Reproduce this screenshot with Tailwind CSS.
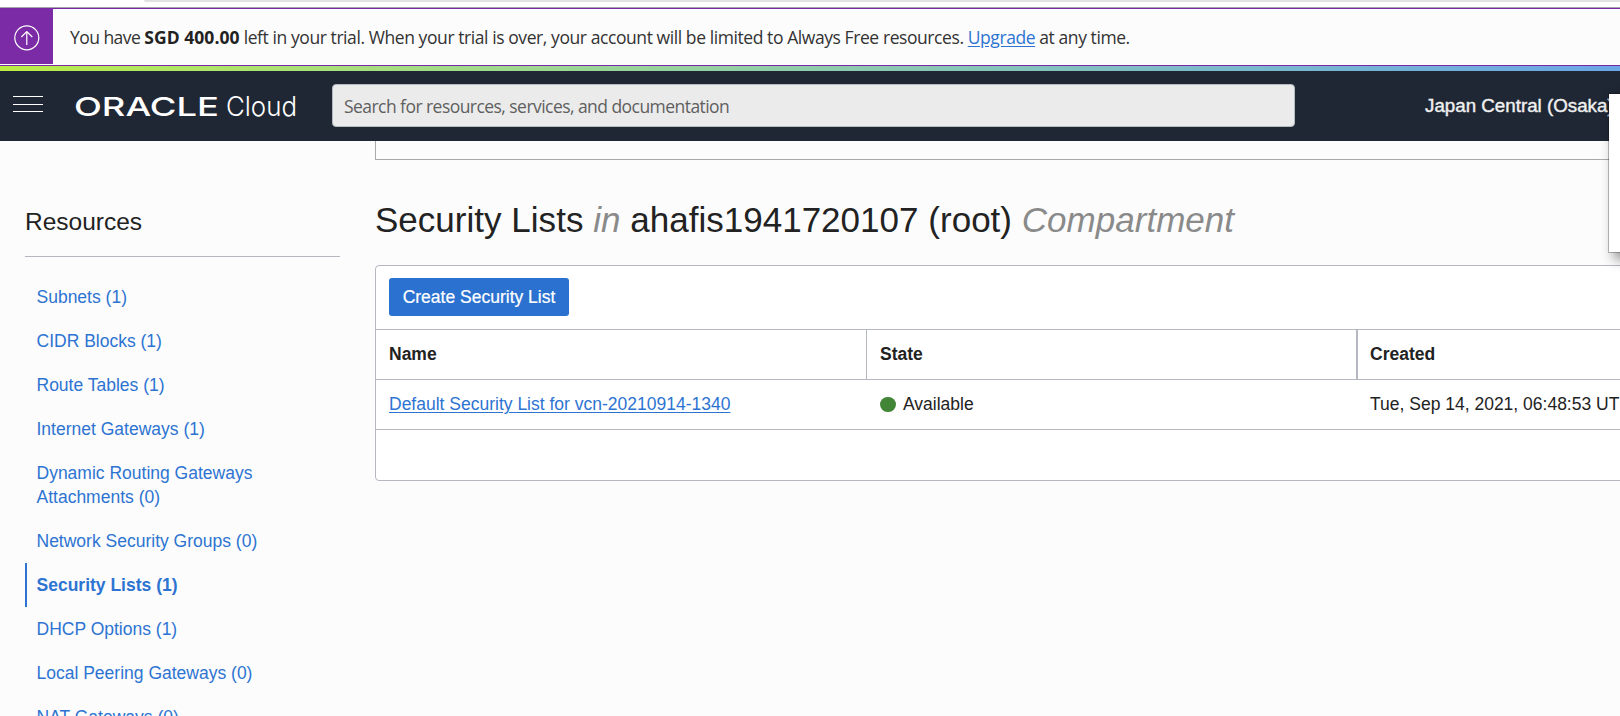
<!DOCTYPE html>
<html lang="en">
<head>
<meta charset="utf-8">
<title>Oracle Cloud - Security Lists</title>
<script src="https://cdn.jsdelivr.net/npm/@tailwindcss/browser@4"></script>
</head>
<body class="relative h-[716px] w-[1620px] overflow-hidden bg-[#fcfcfc] font-['Liberation_Sans',Arial,sans-serif] text-[17.5px] leading-6 text-[#222]">
  <div class="h-[7px] bg-white pl-[144px]"><div class="h-0.5 rounded-bl-full bg-[#e1e1e1]"></div></div>
  <div class="h-px bg-[#a9a3b0]"></div>
  <div class="flex h-[58px] items-start border-y border-[#7a28a3]">
    <div class="flex h-[55px] w-[53px] items-center justify-center bg-[#7b2ba5]">
      <svg class="mt-[3px] h-[26px] w-[26px]" viewBox="0 0 26 26" fill="none" stroke="#fff" stroke-width="1.2"><circle cx="12.800" cy="12.800" r="12"/><path d="M12.800 20V6.500M7.300 12l5.500-5.500 5.500 5.500"/></svg>
    </div>
    <p class="ml-[17px] mt-4 whitespace-nowrap font-['Open_Sans',sans-serif] text-[17.5px] tracking-[-0.42px] text-[#333]"><span class="tracking-[-0.55px]">You have </span><b class="font-bold tracking-[0.05px] text-[#222]">SGD 400.00</b> left in your trial. When your trial is over, your account will be limited to Always Free resources. <a class="text-[#2d74d2] underline underline-offset-2">Upgrade</a> at any time.</p>
  </div>
  <div class="h-[5px] bg-linear-to-r from-[#baec42] to-[#6ba6e6]"></div>
  <header class="flex h-[70px] items-center bg-[#202734]">
    <div class="-mt-1 ml-[13px] flex w-[30px] flex-col"><i class="h-px bg-white"></i><i class="mt-[7px] h-px bg-white"></i><i class="mt-1.5 h-px bg-white"></i></div>
    <svg class="ml-[31px] h-[40px] w-[226px]" viewBox="0 0 226 40" fill="#fff">
      <text x="0" y="29.500" font-family="Inter, sans-serif" font-size="26" font-weight="500" textLength="145" lengthAdjust="spacingAndGlyphs">ORACLE</text>
      <text x="152" y="29.500" font-family="Inter, sans-serif" font-size="27" font-weight="300" textLength="71" lengthAdjust="spacingAndGlyphs">Cloud</text>
    </svg>
    <div class="-mt-px ml-8 flex h-[43px] w-[963px] items-center rounded-[4px] border border-[#b5b9c1] bg-[#ebebeb] pl-[11px] pt-px font-['Open_Sans',sans-serif] tracking-[-0.55px] text-[#5f5f5f]">Search for resources, services, and documentation</div>
    <div class="ml-[130px] whitespace-nowrap text-[18.75px] text-[#f0f0f0] [-webkit-text-stroke:0.4px_#f0f0f0]">Japan Central (Osaka)</div>
  </header>
  <div class="flex h-[575px]">
    <aside class="ml-[25px] w-[315px] shrink-0">
      <h2 class="h-[116px] border-b border-[#b5b8c0] pt-[65px] text-[24.5px] leading-8">Resources</h2>
      <nav class="mt-[18px] flex flex-col whitespace-nowrap text-[#2d74d2]">
        <a class="border-l-2 border-transparent py-2.5 pl-[9.5px]">Subnets (1)</a>
        <a class="border-l-2 border-transparent py-2.5 pl-[9.5px]">CIDR Blocks (1)</a>
        <a class="border-l-2 border-transparent py-2.5 pl-[9.5px]">Route Tables (1)</a>
        <a class="border-l-2 border-transparent py-2.5 pl-[9.5px]">Internet Gateways (1)</a>
        <a class="border-l-2 border-transparent py-2.5 pl-[9.5px]">Dynamic Routing Gateways<br>Attachments (0)</a>
        <a class="border-l-2 border-transparent py-2.5 pl-[9.5px]">Network Security Groups (0)</a>
        <a class="border-l-2 border-[#2d74d2] py-2.5 pl-[9.5px] font-bold">Security Lists (1)</a>
        <a class="border-l-2 border-transparent py-2.5 pl-[9.5px]">DHCP Options (1)</a>
        <a class="border-l-2 border-transparent py-2.5 pl-[9.5px]">Local Peering Gateways (0)</a>
        <a class="border-l-2 border-transparent py-2.5 pl-[9.5px]">NAT Gateways (0)</a>
      </nav>
    </aside>
    <main class="ml-[35px] w-[1300px] shrink-0">
      <div class="h-[19px] border-b border-l border-[#a9a9a9]"></div>
      <h1 class="h-[105px] whitespace-nowrap pt-10 text-[35px] leading-10 tracking-[0.02px]">Security Lists <i class="text-[#8a8a8a]">in</i> ahafis1941720107 (root) <i class="text-[#8a8a8a]">Compartment</i></h1>
      <section class="h-[216px] rounded-[4px] border border-[#b5b8c0] bg-white">
        <div class="h-[63px] pl-[13px] pt-3"><button class="h-[38px] w-[180px] whitespace-nowrap rounded-[3px] bg-[#2b72d0] text-white [-webkit-text-stroke:0.2px_#fff]">Create Security List</button></div>
        <div class="grid h-[51px] grid-cols-[490px_491px_1fr] border-y border-[#b5b8c0] font-bold leading-[48px]">
          <div class="pl-[13px]">Name</div>
          <div class="border-l border-[#b5b8c0] pl-[13px]">State</div>
          <div class="-ml-px border-l-2 border-[#b5b8c0] pl-3">Created</div>
        </div>
        <div class="grid h-[50px] grid-cols-[490px_491px_1fr] border-b border-[#b5b8c0] leading-[48px]">
          <div class="pl-[13px] text-[#2d74d2]"><a class="underline underline-offset-2">Default Security List for vcn-20210914-1340</a></div>
          <div class="flex h-12 items-center pl-3.5"><i class="mr-[7px] mt-px h-[15px] w-4 rounded-full bg-[#438536]"></i>Available</div>
          <div class="whitespace-nowrap pl-[13px]">Tue, Sep 14, 2021, 06:48:53 UTC</div>
        </div>
      </section>
    </main>
  </div>
  <div class="absolute left-[1608px] top-[93px] h-[160px] w-[300px] border border-black/25 bg-white bg-clip-padding shadow-[6px_6px_12px_rgba(0,0,0,0.45)]"></div>
</body>
</html>
